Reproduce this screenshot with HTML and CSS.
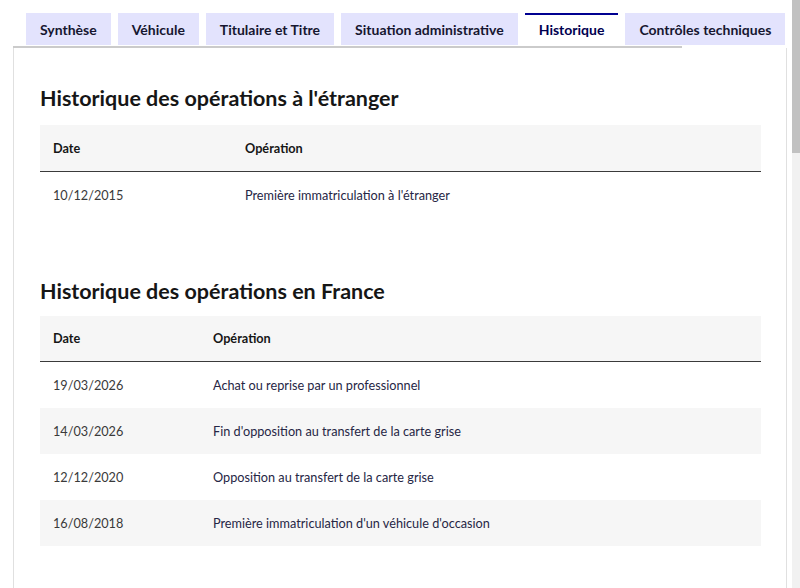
FILE: index.html
```html
<!DOCTYPE html>
<html>
	<head>
		<meta charset="utf-8">
		<title>Historique</title>
		<link rel="stylesheet" href="styles.css">
	</head>
	<body>
		<div id="wrap">
			<ul class="tabs">
				<li>Synthèse</li>
				<li>Véhicule</li>
				<li>Titulaire et Titre</li>
				<li>Situation administrative</li>
				<li class="active">Historique</li>
				<li>Contrôles techniques</li>
			</ul>
			<div class="tabline"></div>
			<div class="panel">
				<h2>Historique des opérations à l'étranger</h2>
				<table class="t1">
					<tr><th class="col-date">Date</th><th>Opération</th></tr>
					<tr><td class="date">10/12/2015</td><td>Première immatriculation à l'étranger</td></tr>
				</table>

				<h2 class="second">Historique des opérations en France</h2>
				<table class="t2">
					<tr><th class="col-date">Date</th><th>Opération</th></tr>
					<tr><td class="date">19/03/2026</td><td>Achat ou reprise par un professionnel</td></tr>
					<tr class="odd"><td class="date">14/03/2026</td><td>Fin d'opposition au transfert de la carte grise</td></tr>
					<tr><td class="date">12/12/2020</td><td>Opposition au transfert de la carte grise</td></tr>
					<tr class="odd"><td class="date">16/08/2018</td><td>Première immatriculation d'un véhicule d'occasion</td></tr>
				</table>
			</div>
		</div>
		<div class="scrollbar"><div class="thumb"></div></div>
	</body>
</html>
```

FILE: styles.css
```css
*{
	margin: 0;
	padding: 0;
}

body{
	font-family: Lato, "Noto Sans", sans-serif;
	color: #161616;
	background: #fff;
	height: 588px;
	overflow: hidden;
	padding-top: 13px;
}

#wrap{
	margin-left: 13px;
	width: 774px;
}

.tabs{
	list-style: none;
	display: flex;
	gap: 7px;
	padding-left: 13px;
}
.tabs li{
	height: 32px;
	line-height: 33px;
	padding: 0 14px;
	background: #e3e3fd;
	font-size: 14px;
	font-weight: 700;
	color: #161630;
	white-space: nowrap;
	box-sizing: border-box;
}
.tabs li.active{
	background: #fff;
	border-top: 2px solid #000091;
	line-height: 30px;
	color: #000050;
}

.tabline{
	height: 2px;
	width: 669px;
	background: #cbcbcb;
	margin-top: 1px;
}

.panel{
	border-left: 1px solid #e0e0e0;
	border-right: 1px solid #e0e0e0;
	padding: 36px 25px 0 26px;
	height: 560px;
	box-sizing: border-box;
}

h2{
	font-size: 21.5px;
	font-weight: 700;
	line-height: 28px;
	margin-bottom: 13px;
}
h2.second{
	margin-top: 59px;
	margin-bottom: 11px;
}

table{
	width: 721px;
	border-collapse: collapse;
	font-size: 12.7px;
}
th{
	background: #f6f6f6;
	text-align: left;
	font-weight: 700;
	height: 46px;
	padding: 0 13px;
	border-bottom: 1px solid #3a3a3a;
	box-sizing: border-box;
}
td{
	height: 46px;
	padding: 0 13px;
	color: #262645;
}
td.date{
	color: #3a3a3a;
}
tr.odd td{
	background: #f6f6f6;
}
.t1 .col-date{
	width: 192px;
}
.t2 .col-date{
	width: 160px;
}

.scrollbar{
	position: absolute;
	top: 0;
	right: 0;
	width: 8px;
	height: 588px;
	background: #f1f1f1;
}
.thumb{
	height: 153px;
	background: #c1c1c1;
}
```
